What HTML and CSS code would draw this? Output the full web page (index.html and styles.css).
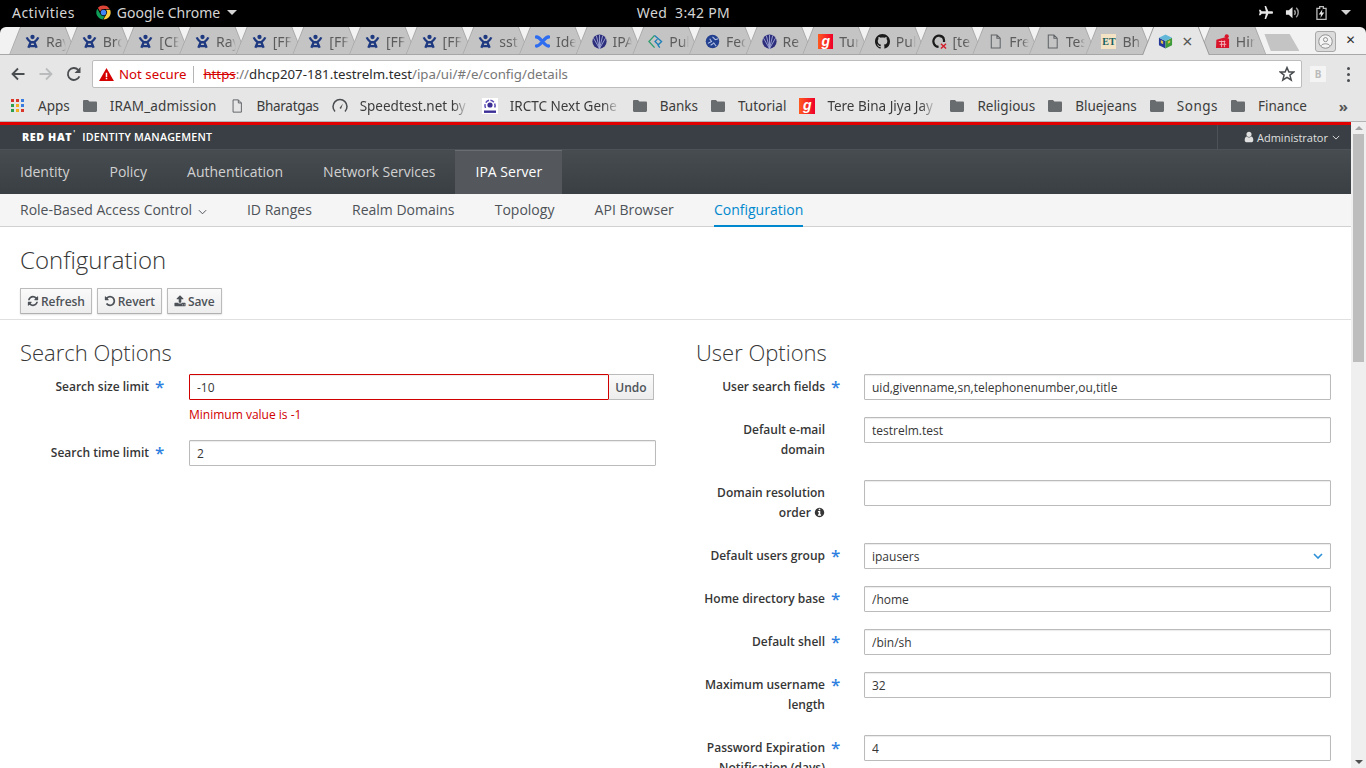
FILE: index.html
```html
<!DOCTYPE html>
<html lang="en">
<head>
    <meta charset="UTF-8">
    <title>Identity Management</title>
    <link rel="stylesheet" href="styles.css">
</head>
<body>
    <svg class="icon-defs" width="0" height="0">
        <symbol id="i-jira" viewBox="0 0 16 16">
            <circle cx="8" cy="3.2" r="2.3" fill="#1f3a80"/>
            <path d="M1.8 3.6C3 6.4 4.6 7.6 6 8.8L3.6 14.6M14.2 3.6C13 6.4 11.4 7.6 10 8.8L12.4 14.6M6 8.8H10M5 13L11 13" fill="none" stroke="#1f3a80" stroke-width="2.5"/>
        </symbol>
        <symbol id="i-confluence" viewBox="0 0 16 16">
            <path d="M1.5 3.2C6 2.6 10 13.4 14.5 12.8M1.5 12.8C6 13.4 10 2.6 14.5 3.2" fill="none" stroke="#2f6df0" stroke-width="3.6" stroke-linecap="round"/>
        </symbol>
        <symbol id="i-shell" viewBox="0 0 16 16">
            <circle cx="8" cy="8" r="7.6" fill="#2e2f7c"/>
            <path d="M8 15.5V1M8 15.5L4.6 1.6M8 15.5L11.4 1.6M8 15.5L1.6 4.4M8 15.5L14.4 4.4" stroke="#a9b0dc" stroke-width=".9"/>
        </symbol>
        <symbol id="i-pull" viewBox="0 0 16 16">
            <path d="M7 1.5L1 8L7 14.5" fill="none" stroke="#2f9e6e" stroke-width="1.4"/>
            <path d="M7 1.5L14.5 8L11 11.5L7.5 8L10 5.5" fill="none" stroke="#1c7fb8" stroke-width="1.4"/>
            <path d="M10.5 11.5L12.5 14.5" stroke="#1c7fb8" stroke-width="1.4"/>
        </symbol>
        <symbol id="i-globe" viewBox="0 0 16 16">
            <circle cx="8" cy="8" r="7.2" fill="#22408f"/>
            <path d="M3 10L7 8L5 5M8 3L11 6L14 5M9 9L12 13M6 12L9 10" fill="none" stroke="#b9c6e8" stroke-width="1.1"/>
        </symbol>
        <symbol id="i-github" viewBox="0 0 16 16">
            <path fill="#1b1b1b" d="M8 0C3.58 0 0 3.58 0 8c0 3.54 2.29 6.53 5.47 7.59.4.07.55-.17.55-.38 0-.19-.01-.82-.01-1.49-2.01.37-2.53-.49-2.69-.94-.09-.23-.48-.94-.82-1.13-.28-.15-.68-.52-.01-.53.63-.01 1.08.58 1.23.82.72 1.21 1.87.87 2.33.66.07-.52.28-.87.51-1.07-1.78-.2-3.64-.89-3.64-3.95 0-.87.31-1.59.82-2.15-.08-.2-.36-1.02.08-2.12 0 0 .67-.21 2.2.82.64-.18 1.32-.27 2-.27.68 0 1.36.09 2 .27 1.53-1.04 2.2-.82 2.2-.82.44 1.1.16 1.92.08 2.12.51.56.82 1.27.82 2.15 0 3.07-1.87 3.75-3.65 3.95.29.25.54.73.54 1.48 0 1.07-.01 1.93-.01 2.2 0 .21.15.46.55.38A8.013 8.013 0 0016 8c0-4.42-3.58-8-8-8z"/>
        </symbol>
        <symbol id="i-gh-error" viewBox="0 0 16 16">
            <path d="M12.5 4.5A6 6 0 1 0 7 13.8M12.8 8.6V6.5A4.8 4.8 0 0 0 8 2.2" fill="none" stroke="#1b1b1b" stroke-width="2.4"/>
            <path d="M9.5 10.5L15 15.5M15 10.5L9.5 15.5" stroke="#d3202c" stroke-width="1.5"/>
        </symbol>
        <symbol id="i-doc" viewBox="0 0 16 16">
            <path d="M3.5 1H9.5L13 4.5V15H3.5ZM9.5 1V4.5H13" fill="none" stroke="#5f6366" stroke-width="1.1"/>
        </symbol>
        <symbol id="i-folder" viewBox="0 0 14 12">
            <path fill="#686c6e" d="M0 1.2C0 .5.5 0 1.2 0H5L6.4 1.6H12.8C13.5 1.6 14 2.1 14 2.8V10.8C14 11.5 13.5 12 12.8 12H1.2C.5 12 0 11.5 0 10.8Z"/>
        </symbol>
        <symbol id="i-cube" viewBox="0 0 16 16">
            <path fill="#24389a" d="M1 4L8 7.5V15.5L1 12Z"/>
            <path fill="#3f9a3c" d="M8 7.5L15 4V12L8 15.5Z"/>
            <path fill="#62b7d8" d="M8 .5L15 4L8 7.5L1 4Z"/>
            <path fill="#d9c24a" d="M3 6.5L5.5 7.8V11L3 9.7ZM10.5 8L13 6.7V9L10.5 10.3Z"/>
        </symbol>
        <symbol id="i-bag" viewBox="0 0 16 16">
            <path fill="#d8152b" d="M1.5 6L11 3.5L15 5V15H1Z"/>
            <circle cx="12.5" cy="2.4" r="2.2" fill="#d8152b"/>
            <path d="M4 8H11M5 11H12M7 7V14M10 7V14" stroke="#f3b4bb" stroke-width="1"/>
        </symbol>
        <symbol id="i-irctc" viewBox="0 0 16 16">
            <rect width="16" height="16" fill="#fff"/>
            <path d="M3.5 10A5.4 5.4 0 0 1 8 2.2A5.4 5.4 0 0 1 12.5 10" fill="none" stroke="#5a4bb5" stroke-width="1.5" stroke-dasharray="4 1.5"/>
            <circle cx="8" cy="7" r="2.6" fill="#3b2f96"/>
            <rect x="2" y="12.5" width="12" height="2.4" fill="#3b2f96"/>
        </symbol>
    </svg>

    <div class="topbar">
        <div class="topbar-left">
            <span class="activities">Activities</span>
            <span class="app-menu">
                <svg class="chrome-logo" viewBox="0 0 16 16">
                    <path fill="#db4437" d="M8 .5A7.5 7.5 0 0 1 14.5 4.2H8A3.8 3.8 0 0 0 4.4 6.8L2 2.9A7.5 7.5 0 0 1 8 .5Z"/>
                    <path fill="#0f9d58" d="M1.4 4A7.5 7.5 0 0 0 7.2 15.4L9.5 11.5A3.8 3.8 0 0 1 4.6 9.7Z"/>
                    <path fill="#ffcd40" d="M15 5H10.5A3.8 3.8 0 0 1 11 10L7.9 15.5A7.5 7.5 0 0 0 15 5Z"/>
                    <circle cx="8" cy="8" r="3" fill="#4285f4"/>
                </svg>
                Google Chrome
                <span class="caret"></span>
            </span>
        </div>
        <div class="clock">Wed&nbsp;&nbsp;3:42 PM</div>
        <div class="topbar-right">
            <svg class="sys-icon" viewBox="0 0 16 16"><path fill="#e6e6e6" d="M7 1H8.6L11 6.6H15C15.6 6.6 16 7.3 16 8S15.6 9.4 15 9.4H11L8.6 15H7L8.4 9.4H4L2.6 11H1L1.8 8L1 5H2.6L4 6.6H8.4Z"/></svg>
            <svg class="sys-icon" viewBox="0 0 16 16"><path fill="#e6e6e6" d="M1 5.5H4L8 2V14L4 10.5H1Z"/><path d="M10 5.5A4 4 0 0 1 10 10.5M12 3A7 7 0 0 1 12 13" fill="none" stroke="#9a9a9a" stroke-width="1.6"/></svg>
            <svg class="sys-icon battery" viewBox="0 0 12 16"><path d="M1 3H4V1H8V3H11V15H1Z" fill="none" stroke="#bdbdbd" stroke-width="1.4"/><path fill="#e6e6e6" d="M7 4L3 9.5H5.5L4.8 13.5L9 7.5H6.4Z"/></svg>
            <span class="caret"></span>
        </div>
    </div>

    <div class="tabstrip">
        <div class="tab"><svg class="fav"><use href="#i-jira"/></svg><span class="tab-title">Ray</span></div>
        <div class="tab"><svg class="fav"><use href="#i-jira"/></svg><span class="tab-title">Bro</span></div>
        <div class="tab"><svg class="fav"><use href="#i-jira"/></svg><span class="tab-title">[CE</span></div>
        <div class="tab"><svg class="fav"><use href="#i-jira"/></svg><span class="tab-title">Ray</span></div>
        <div class="tab"><svg class="fav"><use href="#i-jira"/></svg><span class="tab-title">[FF</span></div>
        <div class="tab"><svg class="fav"><use href="#i-jira"/></svg><span class="tab-title">[FF</span></div>
        <div class="tab"><svg class="fav"><use href="#i-jira"/></svg><span class="tab-title">[FF</span></div>
        <div class="tab"><svg class="fav"><use href="#i-jira"/></svg><span class="tab-title">[FF</span></div>
        <div class="tab"><svg class="fav"><use href="#i-jira"/></svg><span class="tab-title">sst</span></div>
        <div class="tab"><svg class="fav"><use href="#i-confluence"/></svg><span class="tab-title">Ide</span></div>
        <div class="tab"><svg class="fav"><use href="#i-shell"/></svg><span class="tab-title">IPA</span></div>
        <div class="tab"><svg class="fav"><use href="#i-pull"/></svg><span class="tab-title">Pul</span></div>
        <div class="tab"><svg class="fav"><use href="#i-globe"/></svg><span class="tab-title">Fed</span></div>
        <div class="tab"><svg class="fav"><use href="#i-shell"/></svg><span class="tab-title">Re</span></div>
        <div class="tab"><span class="fav gaana">g</span><span class="tab-title">Tur</span></div>
        <div class="tab"><svg class="fav"><use href="#i-github"/></svg><span class="tab-title">Pul</span></div>
        <div class="tab"><svg class="fav"><use href="#i-gh-error"/></svg><span class="tab-title">[te</span></div>
        <div class="tab"><svg class="fav"><use href="#i-doc"/></svg><span class="tab-title">Fre</span></div>
        <div class="tab"><svg class="fav"><use href="#i-doc"/></svg><span class="tab-title">Tes</span></div>
        <div class="tab"><span class="fav et">ET</span><span class="tab-title">Bh</span></div>
        <div class="tab tab-active"><svg class="fav"><use href="#i-cube"/></svg><span class="tab-close">×</span></div>
        <div class="tab"><svg class="fav"><use href="#i-bag"/></svg><span class="tab-title">Hin</span></div>
        <div class="new-tab"></div>
        <div class="profile">
            <svg viewBox="0 0 16 16"><circle cx="8" cy="8" r="7.2" fill="#f4f4f4" stroke="#8c8c8c"/><circle cx="8" cy="6" r="2.2" fill="none" stroke="#8c8c8c"/><path d="M3.6 12.4C4.4 9.8 11.6 9.8 12.4 12.4" fill="none" stroke="#8c8c8c"/></svg>
        </div>
        <span class="window-close">✕</span>
    </div>

    <div class="toolbar">
        <svg class="nav-icon" viewBox="0 0 16 16"><path d="M14.5 8H2.5M8 2.5L2.5 8L8 13.5" fill="none" stroke="#4a4d50" stroke-width="1.8"/></svg>
        <svg class="nav-icon" viewBox="0 0 16 16"><path d="M1.5 8H13.5M8 2.5L13.5 8L8 13.5" fill="none" stroke="#b9bbbd" stroke-width="1.8"/></svg>
        <svg class="nav-icon" viewBox="0 0 16 16"><path d="M13.4 10.4A6 6 0 1 1 12.2 3.8" fill="none" stroke="#4a4d50" stroke-width="1.8"/><path fill="#4a4d50" d="M14.5 1V7H8.5Z"/></svg>
        <div class="omnibox">
            <svg class="warn" viewBox="0 0 16 14"><path fill="#d50000" d="M8 0L16 14H0Z"/><path fill="#fff" d="M7.2 5H8.8V9.6H7.2ZM7.2 10.6H8.8V12.2H7.2Z"/></svg>
            <span class="not-secure">Not secure</span>
            <span class="url"><span class="scheme">https</span><span class="url-dim">://</span>dhcp207-181.testrelm.test<span class="url-dim">/ipa/ui/#/e/config/details</span></span>
            <svg class="star" viewBox="0 0 16 16"><path d="M8 1.6L9.9 6H14.7L10.9 9.1L12.2 14L8 11.3L3.8 14L5.1 9.1L1.3 6H6.1Z" fill="none" stroke="#4a4d50" stroke-width="1.5"/></svg>
        </div>
        <div class="ext-icon"><span>B</span></div>
        <div class="menu-dots"><i></i><i></i><i></i></div>
    </div>

    <div class="bookmarks">
        <div class="bm">
            <span class="apps-grid"><i class="r"></i><i class="r"></i><i class="b"></i><i class="g"></i><i class="y"></i><i class="b"></i><i class="g"></i><i class="y"></i><i class="r"></i></span>
            Apps
        </div>
        <div class="bm"><svg class="bm-folder"><use href="#i-folder"/></svg><span class="bm-wide">IRAM_admission</span></div>
        <div class="bm"><svg class="bm-doc"><use href="#i-doc"/></svg><span class="bm-narrow">Bharatgas</span></div>
        <div class="bm">
            <svg class="bm-gauge" viewBox="0 0 16 16"><path d="M3 13.5A7 7 0 1 1 13 13.5" fill="none" stroke="#4a4d50" stroke-width="1.5"/><path d="M7.5 10L11 5.5L9 11Z" fill="#4a4d50"/></svg>
            <span class="bm-fade bm-w109">Speedtest.net by</span>
        </div>
        <div class="bm"><svg class="bm-irctc"><use href="#i-irctc"/></svg><span class="bm-fade bm-w110">IRCTC Next Gene</span></div>
        <div class="bm"><svg class="bm-folder"><use href="#i-folder"/></svg>Banks</div>
        <div class="bm"><svg class="bm-folder"><use href="#i-folder"/></svg>Tutorial</div>
        <div class="bm"><span class="gaana bm-gaana">g</span><span class="bm-fade bm-w110">Tere Bina Jiya Jay</span></div>
        <div class="bm"><svg class="bm-folder"><use href="#i-folder"/></svg>Religious</div>
        <div class="bm"><svg class="bm-folder"><use href="#i-folder"/></svg>Bluejeans</div>
        <div class="bm"><svg class="bm-folder"><use href="#i-folder"/></svg><span class="bm-songs">Songs</span></div>
        <div class="bm"><svg class="bm-folder"><use href="#i-folder"/></svg>Finance</div>
        <span class="bm-more">»</span>
    </div>

    <div class="viewport">
        <div class="app">
            <div class="masthead">
                <div class="brand"><b>RED HAT</b><sup>'</sup>IDENTITY MANAGEMENT</div>
                <div class="user-menu">
                    <svg class="fa" viewBox="0 0 1792 1792"><path d="M1536 1399q0 109-62.5 187t-150.5 78h-854q-88 0-150.5-78t-62.5-187q0-85 8.5-160.5t31.5-152 58.5-131 94-89 134.5-34.5q131 128 313 128t313-128q76 0 134.5 34.5t94 89 58.5 131 31.5 152 8.5 160.5zm-256-887q0 159-112.5 271.5t-271.5 112.5-271.5-112.5-112.5-271.5 112.5-271.5 271.5-112.5 271.5 112.5 112.5 271.5z"/></svg>
                    Administrator
                    <svg class="chev" viewBox="0 0 10 6"><path d="M1 1L5 5L9 1" fill="none" stroke="currentColor" stroke-width="1.2"/></svg>
                </div>
            </div>
            <div class="primary-nav">
                <a>Identity</a>
                <a>Policy</a>
                <a>Authentication</a>
                <a>Network Services</a>
                <a class="active">IPA Server</a>
            </div>
            <div class="secondary-nav">
                <a>Role-Based Access Control <svg class="chev" viewBox="0 0 10 6"><path d="M1 1L5 5L9 1" fill="none" stroke="currentColor" stroke-width="1.1"/></svg></a>
                <a>ID Ranges</a>
                <a>Realm Domains</a>
                <a>Topology</a>
                <a>API Browser</a>
                <a class="active">Configuration</a>
            </div>
            <div class="page-head">
                <h1>Configuration</h1>
                <div class="actions">
                    <button class="btn"><svg class="fa" viewBox="0 0 1792 1792"><path d="M1639 1056q0 5-1 7-64 268-268 434.5t-478 166.5q-146 0-282.5-55t-243.5-157l-129 129q-19 19-45 19t-45-19-19-45v-448q0-26 19-45t45-19h448q26 0 45 19t19 45-19 45l-137 137q71 66 161 102t187 36q134 0 250-65t186-179q11-17 53-117 8-23 30-23h192q13 0 22.5 9.5t9.5 22.5zm25-800v448q0 26-19 45t-45 19h-448q-26 0-45-19t-19-45 19-45l138-138q-148-137-349-137-134 0-250 65t-186 179q-11 17-53 117-8 23-30 23h-199q-13 0-22.5-9.5t-9.5-22.5v-7q65-268 270-434.5t480-166.5q146 0 284 55.5t245 156.5l130-129q19-19 45-19t45 19 19 45z"/></svg>Refresh</button>
                    <button class="btn"><svg class="fa" viewBox="0 0 1792 1792"><path d="M1664 896q0 156-61 298t-164 245-245 164-298 61q-172 0-327-72.5t-264-204.5q-7-10-6.5-22.5t8.5-20.5l137-138q10-9 25-9 16 2 23 12 73 95 179 147t225 52q104 0 198.5-40.5t163.5-109.5 109.5-163.5 40.5-198.5-40.5-198.5-109.5-163.5-163.5-109.5-198.5-40.5q-98 0-188 35.5t-160 101.5l137 138q31 30 14 69-17 40-59 40h-448q-26 0-45-19t-19-45v-448q0-42 40-59 39-17 69 14l130 129q107-101 244.5-156.5t284.5-55.5q156 0 298 61t245 164 164 245 61 298z"/></svg>Revert</button>
                    <button class="btn"><svg class="fa" viewBox="0 0 1792 1792"><path d="M1344 1472q0-26-19-45t-45-19-45 19-19 45 19 45 45 19 45-19 19-45zm256 0q0-26-19-45t-45-19-45 19-19 45 19 45 45 19 45-19 19-45zm128-224v320q0 40-28 68t-68 28h-1472q-40 0-68-28t-28-68v-320q0-40 28-68t68-28h427q21 56 70.5 92t110.5 36h256q61 0 110.5-36t70.5-92h427q40 0 68 28t28 68zm-325-648q-17 40-59 40h-256v448q0 26-19 45t-45 19h-256q-26 0-45-19t-19-45v-448h-256q-42 0-59-40-17-39 14-69l448-448q18-19 45-19t45 19l448 448q31 30 14 69z"/></svg>Save</button>
                </div>
            </div>
            <div class="form-columns">
                <section class="form-col">
                    <h2>Search Options</h2>
                    <div class="field">
                        <label>Search size limit</label>
                        <span class="req">*</span>
                        <div class="control">
                            <div class="input-group">
                                <input class="input input-error" value="-10">
                                <button class="undo">Undo</button>
                            </div>
                            <div class="error-msg">Minimum value is -1</div>
                        </div>
                    </div>
                    <div class="field">
                        <label>Search time limit</label>
                        <span class="req">*</span>
                        <div class="control"><input class="input" value="2"></div>
                    </div>
                </section>
                <section class="form-col form-col-right">
                    <h2>User Options</h2>
                    <div class="field">
                        <label>User search fields</label>
                        <span class="req">*</span>
                        <div class="control"><input class="input" value="uid,givenname,sn,telephonenumber,ou,title"></div>
                    </div>
                    <div class="field">
                        <label>Default e-mail domain</label>
                        <span class="req"></span>
                        <div class="control"><input class="input" value="testrelm.test"></div>
                    </div>
                    <div class="field">
                        <label>Domain resolution order <svg class="fa info" viewBox="0 0 1792 1792"><path d="M1152 1376v-160q0-14-9-23t-23-9h-96v-512q0-14-9-23t-23-9h-320q-14 0-23 9t-9 23v160q0 14 9 23t23 9h96v320h-96q-14 0-23 9t-9 23v160q0 14 9 23t23 9h448q14 0 23-9t9-23zm-128-896v-160q0-14-9-23t-23-9h-192q-14 0-23 9t-9 23v160q0 14 9 23t23 9h192q14 0 23-9t9-23zm640 416q0 209-103 385.5t-279.5 279.5-385.5 103-385.5-103-279.5-279.5-103-385.5 103-385.5 279.5-279.5 385.5-103 385.5 103 279.5 279.5 103 385.5z"/></svg></label>
                        <span class="req"></span>
                        <div class="control"><input class="input"></div>
                    </div>
                    <div class="field">
                        <label>Default users group</label>
                        <span class="req">*</span>
                        <div class="control select-wrap">
                            <input class="input" value="ipausers">
                            <svg class="select-chev" viewBox="0 0 10 6"><path d="M1 1L5 5L9 1" fill="none" stroke="#2b8fd8" stroke-width="1.6"/></svg>
                        </div>
                    </div>
                    <div class="field">
                        <label>Home directory base</label>
                        <span class="req">*</span>
                        <div class="control"><input class="input" value="/home"></div>
                    </div>
                    <div class="field">
                        <label>Default shell</label>
                        <span class="req">*</span>
                        <div class="control"><input class="input" value="/bin/sh"></div>
                    </div>
                    <div class="field">
                        <label>Maximum username length</label>
                        <span class="req">*</span>
                        <div class="control"><input class="input" value="32"></div>
                    </div>
                    <div class="field">
                        <label>Password Expiration Notification (days)</label>
                        <span class="req">*</span>
                        <div class="control"><input class="input" value="4"></div>
                    </div>
                </section>
            </div>
        </div>
        <div class="scrollbar">
            <span class="sb-up"></span>
            <div class="sb-thumb"></div>
            <span class="sb-down"></span>
        </div>
    </div>
</body>
</html>
```

FILE: styles.css
```css
* {
    box-sizing: border-box;
}

body {
    margin: 0;
    height: 768px;
    overflow: hidden;
    display: flex;
    flex-direction: column;
    background: #000;
    font-family: "Noto Sans", sans-serif;
}

.icon-defs {
    position: absolute;
}

/* gnome bar */
.topbar {
    height: 27px;
    flex: none;
    background: #000;
    color: #d4d4d4;
    font-size: 14px;
    display: grid;
    grid-template-columns: 1fr auto 1fr;
    align-items: center;
    padding: 0 15px 2px 12px;
}

.topbar-left {
    display: flex;
    align-items: center;
    gap: 21px;
}

.activities {
    letter-spacing: .45px;
}

.app-menu {
    display: flex;
    align-items: center;
    gap: 6px;
}

.chrome-logo {
    width: 15px;
    height: 15px;
}

.caret {
    width: 0;
    height: 0;
    border: 5px solid transparent;
    border-top: 5px solid #d4d4d4;
    border-bottom: 0;
    margin-left: 1px;
}

.clock {
    font-size: 14px;
    letter-spacing: .35px;
    padding-left: 4px;
}

.topbar-right {
    display: flex;
    align-items: center;
    justify-content: flex-end;
    gap: 12px;
}

.sys-icon {
    width: 15px;
    height: 15px;
}

.battery {
    width: 11px;
    height: 16px;
    margin: 0 1px 0 4px;
}

/* tabs */
.tabstrip {
    height: 28px;
    flex: none;
    background: #f2f2f2;
    border-radius: 6px 6px 0 0;
    display: flex;
    align-items: stretch;
    padding-left: 9px;
    position: relative;
    box-shadow: inset 0 -1px 0 #a8a8a8;
}

.tab {
    width: 67.67px;
    margin-right: -11px;
    position: relative;
    display: flex;
    align-items: center;
    padding: 0 11px 0 16px;
    gap: 6px;
    background: #a6a6a6;
    clip-path: polygon(0 100%, 11px 0, calc(100% - 11px) 0, 100% 100%);
    font-size: 14px;
    color: #5c5c5c;
}

.tab::before {
    content: "";
    position: absolute;
    left: 1px;
    right: 1px;
    top: 0;
    bottom: 1px;
    background: #c4c4c4;
    clip-path: polygon(0 100%, 11px 0, calc(100% - 11px) 0, 100% 100%);
}

.tab-active {
    z-index: 2;
    background: #9a9a9a;
}

.tab-active::before {
    background: #e6e6e6;
    bottom: 0;
}

.fav {
    width: 15px;
    height: 15px;
    flex: none;
    position: relative;
}

.tab-title {
    position: relative;
    flex: 1;
    overflow: hidden;
    white-space: nowrap;
    -webkit-mask-image: linear-gradient(to right, #000 65%, transparent);
    mask-image: linear-gradient(to right, #000 65%, transparent);
}

.tab-close {
    position: relative;
    font-size: 18px;
    color: #555;
    margin-left: 3px;
}

.gaana {
    background: linear-gradient(to right, #ff5a1f, #f0002a);
    color: #fff;
    font-family: "Liberation Sans", sans-serif;
    font-style: italic;
    font-weight: 700;
    font-size: 14px;
    line-height: 15px;
    text-align: center;
}

.et {
    background: #f3e2c4;
    color: #15605f;
    font-family: "Liberation Serif", serif;
    font-weight: 700;
    font-size: 10px;
    line-height: 16px;
    text-align: center;
}

.new-tab {
    width: 35px;
    height: 17px;
    margin: 7px 0 0 9px;
    background: #c4c4c4;
    clip-path: polygon(0 0, 72% 0, 100% 100%, 18% 100%);
}

.profile {
    width: 21px;
    height: 21px;
    margin: 4px 0 0 16px;
    background: #dcdcdc;
    border: 1px solid #a8a8a8;
    border-radius: 3px;
    display: flex;
    align-items: center;
    justify-content: center;
}

.profile svg {
    width: 15px;
    height: 15px;
}

.window-close {
    margin-left: 9px;
    font-size: 12px;
    line-height: 27px;
    font-weight: 700;
    color: #333;
    font-family: "DejaVu Sans", sans-serif;
}

/* address bar */
.toolbar {
    height: 35px;
    flex: none;
    background: #e6e6e6;
    display: flex;
    align-items: center;
    padding: 3px 10px 0;
    gap: 12px;
}

.nav-icon {
    width: 16px;
    height: 16px;
    flex: none;
}

.omnibox {
    width: 1210px;
    height: 28px;
    flex: none;
    margin-left: -2px;
    background: #fff;
    border: 1px solid #bdbdbd;
    border-radius: 2px;
    display: flex;
    align-items: center;
    padding: 0 6px;
    font-size: 13.25px;
}

.warn {
    width: 15px;
    height: 13px;
    flex: none;
}

.not-secure {
    color: #d50000;
    margin-left: 5px;
    padding-right: 7px;
    border-right: 1px solid #b5b5b5;
    line-height: 17px;
}

.url {
    margin-left: 9px;
    color: #2c2c2c;
    flex: 1;
}

.scheme {
    color: #d50000;
    text-decoration: line-through;
}

.url-dim {
    color: #777;
}

.star {
    width: 16px;
    height: 16px;
    flex: none;
}

.ext-icon {
    width: 16px;
    height: 16px;
    margin-left: -4px;
    background: #f4f4f4;
    display: flex;
    align-items: center;
    justify-content: center;
    flex: none;
}

.ext-icon span {
    font-size: 10px;
    color: #bbb;
    font-weight: 700;
}

.menu-dots {
    margin-left: 9px;
    display: flex;
    flex-direction: column;
    gap: 3px;
}

.menu-dots i {
    width: 3px;
    height: 3px;
    border-radius: 50%;
    background: #4a4d50;
}

/* bookmarks */
.bookmarks {
    height: 32px;
    flex: none;
    background: #e6e6e6;
    border-bottom: 1px solid #b4b4b4;
    display: flex;
    align-items: center;
    padding: 0 18px 0 11px;
    gap: 13px;
    font-size: 13.5px;
    color: #3c3c3c;
}

.bm {
    display: flex;
    align-items: center;
    gap: 13px;
    white-space: nowrap;
}

.bm-wide {
    letter-spacing: .15px;
}

.bm-narrow {
    letter-spacing: -.3px;
}

.bm-songs {
    letter-spacing: .5px;
}

.apps-grid {
    width: 13px;
    height: 13px;
    margin-right: 1px;
    display: grid;
    grid-template-columns: repeat(3, 3px);
    gap: 2px;
}

.apps-grid i {
    width: 3px;
    height: 3px;
}

.apps-grid .r { background: #d9352b; }
.apps-grid .g { background: #2e9e4f; }
.apps-grid .b { background: #3a7be0; }
.apps-grid .y { background: #f2b01e; }

.bm-folder {
    width: 14px;
    height: 12px;
}

.bm-doc {
    width: 14px;
    height: 16px;
}

.bm-gauge,
.bm-irctc,
.bm-gaana {
    width: 16px;
    height: 16px;
    margin-right: -1px;
    flex: none;
}

.bm-fade {
    overflow: hidden;
    -webkit-mask-image: linear-gradient(to right, #000 85%, transparent);
    mask-image: linear-gradient(to right, #000 85%, transparent);
}

.bm-w109 {
    width: 109px;
}

.bm-w110 {
    width: 110px;
}

.bm-more {
    margin-left: auto;
    font-size: 15px;
    font-weight: 700;
    color: #555;
}

/* page */
.viewport {
    flex: 1;
    min-height: 0;
    display: flex;
    background: #fff;
}

.app {
    flex: 1;
    min-width: 0;
    overflow: hidden;
    font-family: "Open Sans", sans-serif;
    font-size: 12px;
    color: #363636;
    border-top: 3px solid #e00000;
}

.masthead {
    height: 25px;
    background: #393f44;
    border-bottom: 1px solid #4d5258;
    display: flex;
    align-items: center;
    justify-content: space-between;
    padding-left: 22px;
    color: #fff;
}

.brand {
    font-size: 10.7px;
    font-weight: 600;
    letter-spacing: .2px;
}

.brand b {
    font-weight: 800;
    letter-spacing: .6px;
}

.brand sup {
    font-size: 8px;
    line-height: 0;
    margin: 0 7px 0 1px;
}

.user-menu {
    height: 100%;
    width: 134px;
    border-left: 1px solid #4d5258;
    display: flex;
    align-items: center;
    gap: 2px;
    padding-left: 25px;
    font-size: 11px;
    color: #e0e0e0;
}

.fa {
    width: 12px;
    height: 12px;
    fill: currentColor;
    flex: none;
}

.chev {
    width: 8px;
    height: 5px;
    margin-left: 2px;
}

.primary-nav {
    height: 44px;
    background: linear-gradient(#474c50, #3a3f44);
    display: flex;
    font-size: 14px;
}

.primary-nav a {
    padding: 0 20px;
    line-height: 44px;
    color: #d1d1d1;
}

.primary-nav .active {
    margin-left: -1px;
    padding-left: 21px;
    background: #54585d;
    color: #fff;
    border-top: 1px solid #6a6e72;
    line-height: 42px;
}

.secondary-nav {
    height: 33px;
    background: #f5f5f5;
    border-bottom: 1px solid #d1d1d1;
    display: flex;
    gap: 40.2px;
    padding-left: 20px;
    font-size: 14px;
    color: #4d5258;
}

.secondary-nav a {
    line-height: 31px;
    height: 33px;
}

.secondary-nav .chev {
    width: 9px;
    height: 6px;
}

.secondary-nav .active {
    color: #0088ce;
    border-bottom: 2px solid #0088ce;
}

.page-head {
    height: 93px;
    padding: 0 20px;
    border-bottom: 1px solid #e0e0e0;
}

h1 {
    margin: 0;
    padding-top: 16px;
    font-size: 24px;
    font-weight: 300;
    line-height: 33px;
    color: #363636;
}

.actions {
    display: flex;
    gap: 5px;
    margin-top: 12px;
}

.btn {
    height: 26px;
    padding: 0 6px;
    display: flex;
    align-items: center;
    gap: 2px;
    font: 600 12px "Open Sans", sans-serif;
    letter-spacing: -.1px;
    color: #4d5258;
    background: linear-gradient(#fafafa, #ededed);
    border: 1px solid #bbb;
    border-bottom-color: #b0b0b0;
    border-radius: 1px;
    box-shadow: 0 1px 2px rgba(0, 0, 0, .12);
}

.form-columns {
    display: grid;
    grid-template-columns: 636px 635px;
    gap: 40px;
    padding: 0 20px;
}

h2 {
    margin: 0;
    padding-top: 16px;
    height: 54px;
    font-size: 22px;
    font-weight: 300;
    line-height: 33px;
    color: #363636;
}

.field {
    display: grid;
    grid-template-columns: 129px 40px 1fr;
    margin-bottom: 17px;
}

.form-col-right .field {
    grid-template-columns: 129px 39px 1fr;
}

.field label {
    text-align: right;
    font-weight: 600;
    line-height: 20px;
    padding: 3px 0 3px 4px;
    color: #363636;
}

.info {
    width: 11px;
    height: 11px;
    vertical-align: -1px;
}

.req {
    color: #2f7fe0;
    font-size: 17px;
    font-weight: 600;
    line-height: 26px;
    padding-left: 6px;
}

.input {
    display: block;
    width: 100%;
    height: 26px;
    border: 1px solid #bbb;
    border-radius: 1px;
    padding: 2px 7px;
    font: 12px "Open Sans", sans-serif;
    color: #363636;
    background: #fff;
    box-shadow: inset 0 1px 1px rgba(3, 3, 3, .08);
    outline: 0;
}

.input-group {
    display: flex;
    margin-right: 2px;
}

.input-error {
    border-color: #d00000;
    flex: 1;
}

.undo {
    width: 45px;
    height: 26px;
    flex: none;
    padding: 0;
    font: 600 12px "Open Sans", sans-serif;
    color: #4d5258;
    background: linear-gradient(#fafafa, #ededed);
    border: 1px solid #bbb;
    border-left: 0;
    border-radius: 0 1px 1px 0;
}

.error-msg {
    height: 23px;
    line-height: 30px;
    color: #d00000;
}

.select-wrap {
    position: relative;
}

.select-chev {
    position: absolute;
    right: 8px;
    top: 10px;
    width: 10px;
    height: 6px;
}

/* fake browser scrollbar */
.scrollbar {
    width: 15px;
    flex: none;
    background: #efefef;
    display: flex;
    flex-direction: column;
    align-items: center;
}

.sb-up {
    width: 0;
    height: 0;
    margin-top: 4px;
    border: 4px solid transparent;
    border-top: 0;
    border-bottom: 4px solid #a3a3a3;
}

.sb-thumb {
    width: 11px;
    height: 228px;
    margin-top: 4px;
    background: #bdbdbd;
}

.sb-down {
    width: 0;
    height: 0;
    margin-top: auto;
    margin-bottom: 4px;
    border: 4px solid transparent;
    border-bottom: 0;
    border-top: 4px solid #505050;
}
```
